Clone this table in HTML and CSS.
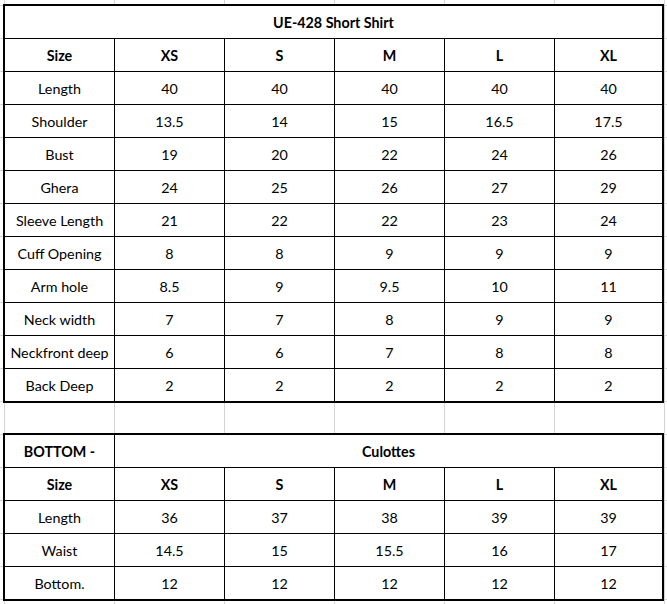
FILE: index.html
```html
<!DOCTYPE html>
<html>
<head>
<meta charset="utf-8">
<link rel="stylesheet" href="styles.css">
</head>
<body>
<div class="sheet">
  <div class="tbl">
    <div class="c span-all b">UE-428 Short Shirt</div>
    <div class="c b">Size</div><div class="c b">XS</div><div class="c b">S</div><div class="c b">M</div><div class="c b">L</div><div class="c b">XL</div>
    <div class="c">Length</div><div class="c">40</div><div class="c">40</div><div class="c">40</div><div class="c">40</div><div class="c">40</div>
    <div class="c">Shoulder</div><div class="c">13.5</div><div class="c">14</div><div class="c">15</div><div class="c">16.5</div><div class="c">17.5</div>
    <div class="c">Bust</div><div class="c">19</div><div class="c">20</div><div class="c">22</div><div class="c">24</div><div class="c">26</div>
    <div class="c">Ghera</div><div class="c">24</div><div class="c">25</div><div class="c">26</div><div class="c">27</div><div class="c">29</div>
    <div class="c">Sleeve Length</div><div class="c">21</div><div class="c">22</div><div class="c">22</div><div class="c">23</div><div class="c">24</div>
    <div class="c">Cuff Opening</div><div class="c">8</div><div class="c">8</div><div class="c">9</div><div class="c">9</div><div class="c">9</div>
    <div class="c">Arm hole</div><div class="c">8.5</div><div class="c">9</div><div class="c">9.5</div><div class="c">10</div><div class="c">11</div>
    <div class="c">Neck width</div><div class="c">7</div><div class="c">7</div><div class="c">8</div><div class="c">9</div><div class="c">9</div>
    <div class="c">Neckfront deep</div><div class="c">6</div><div class="c">6</div><div class="c">7</div><div class="c">8</div><div class="c">8</div>
    <div class="c">Back Deep</div><div class="c">2</div><div class="c">2</div><div class="c">2</div><div class="c">2</div><div class="c">2</div>
  </div>
  <div class="tbl second">
    <div class="c b">BOTTOM -</div><div class="c span-rest b">Culottes</div>
    <div class="c b">Size</div><div class="c b">XS</div><div class="c b">S</div><div class="c b">M</div><div class="c b">L</div><div class="c b">XL</div>
    <div class="c">Length</div><div class="c">36</div><div class="c">37</div><div class="c">38</div><div class="c">39</div><div class="c">39</div>
    <div class="c">Waist</div><div class="c">14.5</div><div class="c">15</div><div class="c">15.5</div><div class="c">16</div><div class="c">17</div>
    <div class="c">Bottom.</div><div class="c">12</div><div class="c">12</div><div class="c">12</div><div class="c">12</div><div class="c">12</div>
  </div>
</div>
</body>
</html>
```

FILE: styles.css
```css
html, body {
  margin: 0;
  padding: 0;
}
body {
  width: 667px;
  min-height: 604px;
  overflow: hidden;
  background-color: #fff;
  background-image:
    linear-gradient(to right, #d4d4d4 1px, transparent 1px),
    linear-gradient(to bottom, #d4d4d4 1px, transparent 1px);
  background-size: 110px 100%, 100% 33px;
  background-position: 4px 0, 0 5px;
  font-family: Lato, "Open Sans", sans-serif;
  font-size: 14.3px;
  color: #000;
}
.sheet {
  padding: 4px 0 0 3px;
}
.tbl {
  display: grid;
  grid-template-columns: 109px 109px 109px 109px 109px 107px;
  grid-auto-rows: 32px;
  gap: 1px;
  background: #000;
  border: 2px solid #000;
  width: max-content;
}
.second {
  margin-top: 30px;
}
.c {
  background: #fff;
  display: flex;
  align-items: center;
  justify-content: center;
  white-space: nowrap;
}
.b {
  font-weight: 700;
}
.span-all {
  grid-column: 1 / -1;
}
.span-rest {
  grid-column: 2 / -1;
}
```
